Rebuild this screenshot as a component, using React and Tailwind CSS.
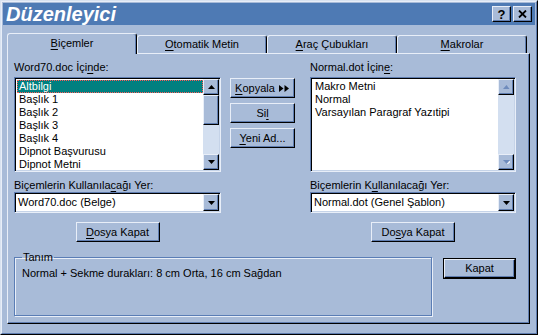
import React from "react";

function U({ children }) {
  return <span className="underline underline-offset-[2px] decoration-1">{children}</span>;
}

function Arrow({ dir = "down", disabled = false }) {
  const pts = dir === "down" ? "0,0 7,0 3.5,4" : "0,4 7,4 3.5,0";
  return (
    <svg width="7" height="4" viewBox="0 0 7 4" className="block">
      {disabled && (
        <polygon points={pts} fill="#e8eef8" transform="translate(1,1)" />
      )}
      <polygon points={pts} fill={disabled ? "#6f8cbc" : "#000"} />
    </svg>
  );
}

function SBtn({ dir, disabled, className = "" }) {
  return (
    <div
      className={`w-[16px] h-[16px] shrink-0 flex items-center justify-center bg-[#a8bbd8] border border-t-[#e8eef8] border-l-[#e8eef8] border-r-black border-b-black shadow-[inset_-1px_-1px_0_#5f7db0] ${className}`}
    >
      <Arrow dir={dir} disabled={disabled} />
    </div>
  );
}

function Btn({ children, className = "" }) {
  return (
    <div
      className={`flex items-center justify-center bg-[#a8bbd8] border border-t-[#e8eef8] border-l-[#e8eef8] border-r-black border-b-black shadow-[inset_-1px_-1px_0_#5f7db0] text-[11px] leading-none text-black ${className}`}
    >
      {children}
    </div>
  );
}

const sunken =
  "border border-t-[#5f7db0] border-l-[#5f7db0] border-r-[#e8eef8] border-b-[#e8eef8] shadow-[inset_1px_1px_0_#000,inset_-1px_-1px_0_#c5d3e8]";

function ListBox({ items, selected, disabled }) {
  return (
    <div className={`h-[95px] bg-white flex ${sunken} p-[1px]`}>
      <div className="flex-1 flex flex-col pt-[1px] pl-[1px] overflow-hidden">
        {items.map((it, i) => (
          <div
            key={it}
            className={`h-[13px] leading-[13px] pl-[2px] text-[11px] whitespace-nowrap ${
              i === selected
                ? "bg-[#008080] text-white outline-1 outline-dotted outline-[#ff5a5a] -outline-offset-1"
                : "text-black"
            }`}
          >
            {it}
          </div>
        ))}
      </div>
      <div className="w-[16px] flex flex-col bg-[#d3dff0]">
        <SBtn dir="up" disabled={disabled} />
        {!disabled && (
          <div className="h-[30px] bg-[#a8bbd8] border border-t-[#e8eef8] border-l-[#e8eef8] border-r-black border-b-black shadow-[inset_-1px_-1px_0_#5f7db0]" />
        )}
        <div className="flex-1" />
        <SBtn dir="down" disabled={disabled} />
      </div>
    </div>
  );
}

function Combo({ value }) {
  return (
    <div className={`h-[21px] bg-white flex items-stretch ${sunken} p-[1px]`}>
      <div className="flex-1 pl-[2px] text-[11px] leading-[17px] text-black whitespace-nowrap">
        {value}
      </div>
      <SBtn dir="down" className="h-[17px]" />
    </div>
  );
}

function Tab({ children, selected }) {
  return (
    <div
      className={`w-[130px] flex items-center justify-center bg-[#a8bbd8] border-l border-t border-r border-l-[#e8eef8] border-t-[#e8eef8] border-r-black rounded-t-[3px] shadow-[inset_-1px_0_0_#5f7db0] text-[11px] text-black ${
        selected ? "h-[21px] -mb-[1px] relative z-10 pb-[2px]" : "h-[18px]"
      }`}
    >
      {children}
    </div>
  );
}

export default function App() {
  return (
    <div
      className="w-[538px] h-[335px] bg-[#a8bbd8] border border-t-[#d8e2f0] border-l-[#d8e2f0] border-r-black border-b-black overflow-hidden"
      style={{ fontFamily: '"Liberation Sans", Arial, sans-serif' }}
    >
      <div className="h-full border border-t-[#e8eef8] border-l-[#e8eef8] border-r-[#5f7db0] border-b-[#5f7db0] pt-[1px] px-[1px] flex flex-col">
        {/* Title bar */}
        <div className="h-[22px] shrink-0 bg-[#4e7ab4] flex items-center pl-[3px] pr-[3px]">
          <div className="flex-1 text-white text-[20px] font-bold italic leading-none">
            Düzenleyici
          </div>
          <div className="flex gap-[2px]">
            <div className="w-[19px] h-[16px] bg-[#a8bbd8] border border-t-[#e8eef8] border-l-[#e8eef8] border-r-black border-b-black shadow-[inset_-1px_-1px_0_#5f7db0] flex items-center justify-center text-[13px] font-bold leading-none text-black">
              ?
            </div>
            <div className="w-[19px] h-[16px] bg-[#a8bbd8] border border-t-[#e8eef8] border-l-[#e8eef8] border-r-black border-b-black shadow-[inset_-1px_-1px_0_#5f7db0] flex items-center justify-center">
              <svg width="9" height="8" viewBox="0 0 9 8">
                <path d="M1 0.5 L8 7.5 M8 0.5 L1 7.5" stroke="#000" strokeWidth="1.8" />
              </svg>
            </div>
          </div>
        </div>

        {/* Body */}
        <div className="flex-1 pl-[4px] pr-[5px] pt-[8px]">
          {/* Tabs */}
          <div className="h-[20px] flex items-end">
            <Tab selected>
              <span><U>B</U>içemler</span>
            </Tab>
            <Tab>
              <span><U>O</U>tomatik Metin</span>
            </Tab>
            <Tab>
              <span><U>A</U>raç Çubukları</span>
            </Tab>
            <Tab>
              <span><U>M</U>akrolar</span>
            </Tab>
          </div>

          {/* Panel */}
          <div className="h-[271px] border border-t-[#e8eef8] border-l-[#e8eef8] border-r-black border-b-black shadow-[inset_-1px_-1px_0_#5f7db0] pl-[6px] pt-[6px]">
            <div className="flex items-start">
              {/* Left column */}
              <div className="w-[207px] flex flex-col">
                <div className="h-[14px] leading-[14px] text-[11px] text-black mb-[3px]">
                  Word70.doc İçi<U>n</U>de:
                </div>
                <ListBox
                  selected={0}
                  items={[
                    "Altbilgi",
                    "Başlık 1",
                    "Başlık 2",
                    "Başlık 3",
                    "Başlık 4",
                    "Dipnot Başvurusu",
                    "Dipnot Metni",
                  ]}
                />
                <div className="h-[14px] leading-[14px] text-[11px] text-black mt-[6px]">
                  Biçemlerin Kullanıla<U>c</U>ağı Yer:
                </div>
                <Combo value="Word70.doc (Belge)" />
                <Btn className="w-[84px] h-[20px] self-center mt-[9px]">
                  <span><U>D</U>osya Kapat</span>
                </Btn>
              </div>

              {/* Middle buttons */}
              <div className="w-[65px] ml-[9px] mt-[18px] flex flex-col gap-[5px]">
                <Btn className="h-[20px] gap-[4px]">
                  <span><U>K</U>opyala</span>
                  <svg width="11" height="7" viewBox="0 0 11 7">
                    <polygon points="0,0 4.5,3.5 0,7" fill="#000" />
                    <polygon points="5.5,0 10,3.5 5.5,7" fill="#000" />
                  </svg>
                </Btn>
                <Btn className="h-[20px]">
                  <span>Si<U>l</U></span>
                </Btn>
                <Btn className="h-[20px]">
                  <span><U>Y</U>eni Ad...</span>
                </Btn>
              </div>

              {/* Right column */}
              <div className="w-[206px] ml-[15px] flex flex-col">
                <div className="h-[14px] leading-[14px] text-[11px] text-black mb-[3px]">
                  Normal.dot İçin<U>e</U>:
                </div>
                <ListBox
                  selected={-1}
                  disabled
                  items={["Makro Metni", "Normal", "Varsayılan Paragraf Yazıtipi"]}
                />
                <div className="h-[14px] leading-[14px] text-[11px] text-black mt-[6px]">
                  Biçemlerin K<U>u</U>llanılacağı Yer:
                </div>
                <Combo value="Normal.dot (Genel Şablon)" />
                <Btn className="w-[84px] h-[20px] self-center mt-[9px]">
                  <span>Do<U>s</U>ya Kapat</span>
                </Btn>
              </div>
            </div>

            {/* Bottom row */}
            <div className="flex items-start mt-[9px]">
              <fieldset className="w-[418px] h-[65px] border border-[#5a7db5] shadow-[1px_1px_0_#e8eef8,inset_1px_1px_0_#e8eef8] pl-[7px]">
                <legend className="text-[11px] leading-[13px] text-black px-[1px] ml-[0px]">
                  Tanım
                </legend>
                <div className="text-[11px] leading-[13px] text-black mt-[3px] whitespace-nowrap">
                  Normal + Sekme durakları: 8 cm Orta, 16 cm Sağdan
                </div>
              </fieldset>
              <div className="ml-[11px] mt-[7px] w-[73px] h-[21px] border border-black">
                <Btn className="w-full h-full">Kapat</Btn>
              </div>
            </div>
          </div>
        </div>
      </div>
    </div>
  );
}
